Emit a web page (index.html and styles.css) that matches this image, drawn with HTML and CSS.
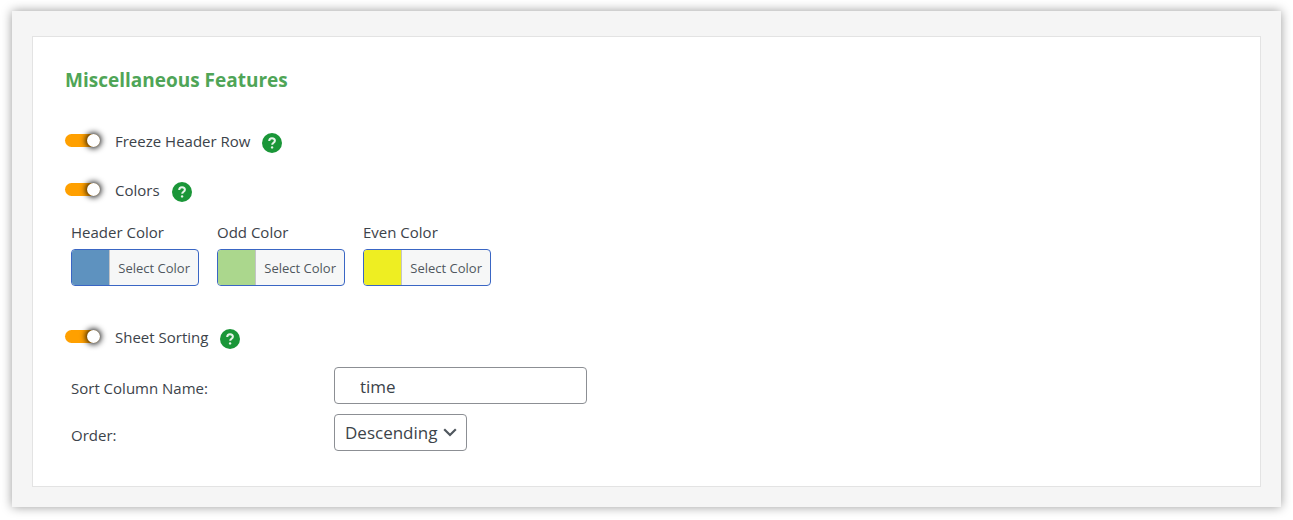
FILE: index.html
```
<!DOCTYPE html>
<html lang="en">

<head>
    <meta charset="UTF-8">
    <meta name="viewport" content="width=device-width, initial-scale=1.0">
    <title>Miscellaneous Features</title>
    <link rel="stylesheet" href="styles.css">
</head>

<body>
    <main class="panel">
        <form class="card">
            <h2 class="title">Miscellaneous Features</h2>

            <div class="option">
                <input type="checkbox" class="toggle" id="freeze" checked>
                <label for="freeze">Freeze Header Row</label>
                <button type="button" class="help" aria-label="Help: Freeze Header Row">
                    <svg viewBox="0 0 20 20"><circle cx="10" cy="10" r="10" fill="#1a9638"/><path d="M7.2 8C7.2 6.2 8.3 5.2 10 5.2S12.9 6.2 12.9 7.7C12.9 9.6 10.2 9.8 10.2 11.7" fill="none" stroke="#e6f4e9" stroke-width="2"/><circle cx="10.1" cy="14.4" r="1.2" fill="#e6f4e9"/></svg>
                </button>
            </div>

            <div class="option">
                <input type="checkbox" class="toggle" id="colors" checked>
                <label for="colors">Colors</label>
                <button type="button" class="help" aria-label="Help: Colors">
                    <svg viewBox="0 0 20 20"><circle cx="10" cy="10" r="10" fill="#1a9638"/><path d="M7.2 8C7.2 6.2 8.3 5.2 10 5.2S12.9 6.2 12.9 7.7C12.9 9.6 10.2 9.8 10.2 11.7" fill="none" stroke="#e6f4e9" stroke-width="2"/><circle cx="10.1" cy="14.4" r="1.2" fill="#e6f4e9"/></svg>
                </button>
            </div>

            <div class="colors">
                <div class="color">
                    <label for="header-color">Header Color</label>
                    <button type="button" class="picker" id="header-color">
                        <span class="swatch swatch-header"></span>
                        <span class="picker-text">Select Color</span>
                    </button>
                </div>
                <div class="color">
                    <label for="odd-color">Odd Color</label>
                    <button type="button" class="picker" id="odd-color">
                        <span class="swatch swatch-odd"></span>
                        <span class="picker-text">Select Color</span>
                    </button>
                </div>
                <div class="color">
                    <label for="even-color">Even Color</label>
                    <button type="button" class="picker" id="even-color">
                        <span class="swatch swatch-even"></span>
                        <span class="picker-text">Select Color</span>
                    </button>
                </div>
            </div>

            <div class="option">
                <input type="checkbox" class="toggle" id="sorting" checked>
                <label for="sorting">Sheet Sorting</label>
                <button type="button" class="help" aria-label="Help: Sheet Sorting">
                    <svg viewBox="0 0 20 20"><circle cx="10" cy="10" r="10" fill="#1a9638"/><path d="M7.2 8C7.2 6.2 8.3 5.2 10 5.2S12.9 6.2 12.9 7.7C12.9 9.6 10.2 9.8 10.2 11.7" fill="none" stroke="#e6f4e9" stroke-width="2"/><circle cx="10.1" cy="14.4" r="1.2" fill="#e6f4e9"/></svg>
                </button>
            </div>

            <div class="fields">
                <label for="sort-column">Sort Column Name:</label>
                <input type="text" class="text-input" id="sort-column" value="time">
                <label for="order">Order:</label>
                <div class="select-wrap">
                    <select class="select" id="order">
                        <option>Ascending</option>
                        <option selected>Descending</option>
                    </select>
                    <svg class="chevron" viewBox="0 0 14 9"><path d="M1.2 1.2L7 7L12.8 1.2" fill="none" stroke="#50575e" stroke-width="2.2"/></svg>
                </div>
            </div>
        </form>
    </main>
</body>

</html>
```
FILE: styles.css
```
* {
    box-sizing: border-box;
}

body {
    margin: 0;
    padding: 11px 12px 13px;
    background-color: #fff;
    color: #3c434a;
    font-family: "Open Sans", "Noto Sans", sans-serif;
    font-size: 15px;
    line-height: 20px;
}

button,
input,
select {
    margin: 0;
    font-family: inherit;
    color: inherit;
}

.panel {
    padding: 25px 20px 20px;
    background-color: #f5f5f5;
    box-shadow: 0 0 10px rgba(0, 0, 0, 0.4);
}

.card {
    padding: 30px 32px 35px;
    background-color: #fff;
    border: 1px solid #e3e3e3;
}

.title {
    margin: 0 0 34px;
    color: #4fa557;
    font-size: 19px;
    font-weight: 700;
    line-height: 26px;
}

.option {
    display: flex;
    align-items: center;
    height: 28px;
    margin-bottom: 21px;
}

.toggle {
    appearance: none;
    display: flex;
    justify-content: flex-end;
    width: 35px;
    height: 13px;
    margin: 0 15px 2px 0;
    border-radius: 7px;
    background-color: #ffa000;
    cursor: pointer;
}

.toggle::before {
    content: "";
    width: 13px;
    height: 13px;
    border-radius: 50%;
    background-color: #fff;
    box-shadow: 0 0 6px 1px #000;
}

.toggle:not(:checked) {
    justify-content: flex-start;
    background-color: #ccc;
}

.help {
    width: 20px;
    height: 20px;
    margin: 3px 0 0 12px;
    padding: 0;
    border: none;
    background: none;
    cursor: pointer;
}

.help svg {
    display: block;
    width: 20px;
    height: 20px;
}

.colors {
    display: flex;
    gap: 18px;
    margin: -3px 6px 37px;
}

.color {
    display: flex;
    flex-direction: column;
    gap: 7px;
}

.picker {
    display: flex;
    align-items: stretch;
    width: 128px;
    height: 37px;
    padding: 0;
    overflow: hidden;
    border: 1px solid #3a66c4;
    border-radius: 4px;
    background-color: #f6f7f7;
    color: #50575e;
    font-size: 13px;
    cursor: pointer;
}

.swatch {
    flex: 1;
}

.swatch-header {
    background-color: #5e92bf;
}

.swatch-odd {
    background-color: #abd78d;
}

.swatch-even {
    background-color: #eeee22;
}

.picker-text {
    padding: 0 8px;
    border-left: 1px solid #c3c4c7;
    line-height: 36px;
    white-space: nowrap;
}

.fields {
    display: grid;
    grid-template-columns: 263px 1fr;
    gap: 10px 0;
    align-items: center;
    margin: -5px 6px 0;
}

.fields label {
    padding-top: 4px;
}

.text-input {
    width: 253px;
    height: 37px;
    padding: 2px 25px 0;
    border: 1px solid #8c8f94;
    border-radius: 4px;
    background-color: #fff;
    font-size: 17px;
}

.select-wrap {
    position: relative;
    justify-self: start;
}

.select {
    appearance: none;
    display: block;
    width: 133px;
    height: 37px;
    padding: 0 28px 0 10px;
    border: 1px solid #8c8f94;
    border-radius: 4px;
    background-color: #fff;
    font-size: 17px;
}

.chevron {
    position: absolute;
    top: 14px;
    right: 10px;
    width: 14px;
    height: 9px;
    pointer-events: none;
}
```
